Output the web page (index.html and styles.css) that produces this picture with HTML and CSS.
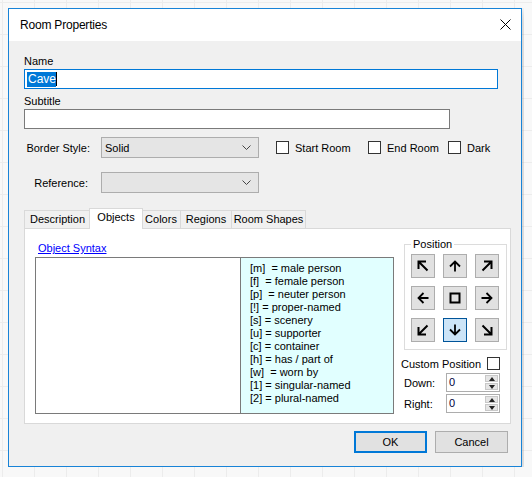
FILE: index.html
```html
<!DOCTYPE html>
<html lang="en">
<head>
    <meta charset="UTF-8">
    <title>Room Properties</title>
    <link rel="stylesheet" href="styles.css">
</head>
<body>
    <div class="dialog">
        <div class="titlebar">
            <span class="title">Room Properties</span>
            <svg class="close" width="11" height="11" viewBox="0 0 11 11"><path d="M0.5 0.5 L10.5 10.5 M10.5 0.5 L0.5 10.5" stroke="#000" stroke-width="1" fill="none"/></svg>
        </div>

        <div class="client">
            <div class="field-label">Name</div>
            <div class="textbox name-box focused"><span class="sel">Cave</span><span class="caret"></span></div>

            <div class="field-label gap">Subtitle</div>
            <div class="textbox subtitle-box"></div>

            <div class="row row-border">
                <div class="row-label">Border Style:</div>
                <div class="combo"><span>Solid</span>
                    <svg width="9" height="5" viewBox="0 0 9 5"><path d="M0.5 0.5 L4.5 4.5 L8.5 0.5" stroke="#444" fill="none"/></svg>
                </div>
                <label class="check check-start"><span class="box"></span>Start Room</label>
                <label class="check check-end"><span class="box"></span>End Room</label>
                <label class="check"><span class="box"></span>Dark</label>
            </div>

            <div class="row row-ref">
                <div class="row-label">Reference:</div>
                <div class="combo"><span></span>
                    <svg width="9" height="5" viewBox="0 0 9 5"><path d="M0.5 0.5 L4.5 4.5 L8.5 0.5" stroke="#444" fill="none"/></svg>
                </div>
            </div>

            <div class="tabs">
                <div class="tab tab-desc">Description</div>
                <div class="tab tab-obj active">Objects</div>
                <div class="tab tab-col">Colors</div>
                <div class="tab tab-reg">Regions</div>
                <div class="tab tab-shape">Room Shapes</div>
            </div>

            <div class="tab-panel">
                <div class="left-col">
                    <a class="link" href="#">Object Syntax</a>
                    <div class="syntax-box">
                        <div class="syntax-edit"></div>
                        <div class="syntax-help">
                            <div>[m]&nbsp; = male person</div>
                            <div>[f]&nbsp; = female person</div>
                            <div>[p]&nbsp; = neuter person</div>
                            <div>[!] = proper-named</div>
                            <div>[s] = scenery</div>
                            <div>[u] = supporter</div>
                            <div>[c] = container</div>
                            <div>[h] = has / part of</div>
                            <div>[w]&nbsp; = worn by</div>
                            <div>[1] = singular-named</div>
                            <div>[2] = plural-named</div>
                        </div>
                    </div>
                </div>

                <div class="right-col">
                    <div class="group">
                        <span class="legend">Position</span>
                        <div class="pos-grid">
                            <div class="pos-btn"><svg width="12" height="12" viewBox="0 0 12 12"><path d="M1.5 9 V1.5 H9 M1.5 1.5 L10.5 10.5" stroke="#000" stroke-width="2" fill="none"/></svg></div>
                            <div class="pos-btn"><svg width="12" height="12" viewBox="0 0 12 12"><path d="M6 11.5 V1.5 M1 6.5 L6 1.5 L11 6.5" stroke="#000" stroke-width="1.8" fill="none"/></svg></div>
                            <div class="pos-btn"><svg width="12" height="12" viewBox="0 0 12 12"><path d="M3 1.5 H10.5 V9 M10.5 1.5 L1.5 10.5" stroke="#000" stroke-width="2" fill="none"/></svg></div>
                            <div class="pos-btn"><svg width="12" height="12" viewBox="0 0 12 12"><path d="M11.5 6 H1.5 M6.5 1 L1.5 6 L6.5 11" stroke="#000" stroke-width="1.8" fill="none"/></svg></div>
                            <div class="pos-btn"><svg width="12" height="12" viewBox="0 0 12 12"><rect x="1.5" y="1.5" width="9" height="9" stroke="#000" stroke-width="2" fill="none"/></svg></div>
                            <div class="pos-btn"><svg width="12" height="12" viewBox="0 0 12 12"><path d="M0.5 6 H10.5 M5.5 1 L10.5 6 L5.5 11" stroke="#000" stroke-width="1.8" fill="none"/></svg></div>
                            <div class="pos-btn"><svg width="12" height="12" viewBox="0 0 12 12"><path d="M1.5 3 V10.5 H9 M1.5 10.5 L10.5 1.5" stroke="#000" stroke-width="2" fill="none"/></svg></div>
                            <div class="pos-btn current"><svg width="12" height="12" viewBox="0 0 12 12"><path d="M6 0.5 V10.5 M1 5.5 L6 10.5 L11 5.5" stroke="#000" stroke-width="1.8" fill="none"/></svg></div>
                            <div class="pos-btn"><svg width="12" height="12" viewBox="0 0 12 12"><path d="M10.5 3 V10.5 H3 M10.5 10.5 L1.5 1.5" stroke="#000" stroke-width="2" fill="none"/></svg></div>
                        </div>
                    </div>

                    <label class="custom-row">Custom Position <span class="box"></span></label>

                    <div class="spin-row">
                        <span class="spin-label">Down:</span>
                        <div class="spin"><span class="spin-val">0</span>
                            <div class="spin-btns"><span class="up"></span><span class="down"></span></div>
                        </div>
                    </div>
                    <div class="spin-row">
                        <span class="spin-label">Right:</span>
                        <div class="spin"><span class="spin-val">0</span>
                            <div class="spin-btns"><span class="up"></span><span class="down"></span></div>
                        </div>
                    </div>
                </div>
            </div>

            <div class="buttons">
                <button class="btn default">OK</button>
                <button class="btn">Cancel</button>
            </div>
        </div>
    </div>
</body>
</html>
```

FILE: styles.css
```css
* {
    margin: 0;
    padding: 0;
    box-sizing: border-box;
}
body {
    margin: 8px;
    font-family: "Liberation Sans", Arial, sans-serif;
    font-size: 11px;
    color: #000;
    background-color: #f8f8f8;
    background-image:
        linear-gradient(to right, #ececec 1px, transparent 1px),
        linear-gradient(to bottom, #ececec 1px, transparent 1px);
    background-size: 32px 32px;
    background-position: 2px 2px;
}
.dialog {
    width: 514px;
    border: 1px solid #1883d7;
    background: #f0f0f0;
    box-shadow: 3px 4px 10px rgba(0,0,0,0.18);
}
.titlebar {
    height: 32px;
    background: #ffffff;
    display: flex;
    align-items: center;
    justify-content: space-between;
    padding: 0 10px 0 11px;
}
.title {
    font-size: 12px;
    letter-spacing: -0.2px;
}
.close {
    display: block;
    margin-top: -2px;
}
.client {
    padding: 12px 11px 13px 15px;
}
.field-label {
    height: 16px;
    line-height: 16px;
}
.field-label.gap {
    margin-top: 4px;
}
.textbox {
    height: 20px;
    background: #fff;
    border: 1px solid #7a7a7a;
    display: flex;
    align-items: center;
    padding-left: 2px;
    font-size: 12px;
}
.name-box {
    width: 474px;
    border-color: #0078d7;
}
.subtitle-box {
    width: 426px;
}
.sel {
    background: #0078d7;
    color: #fff;
    line-height: 15px;
    padding: 0 0 0 1px;
}
.caret {
    width: 1px;
    height: 14px;
    background: #000;
}
.row {
    display: flex;
    align-items: center;
    height: 21px;
}
.row-border {
    margin-top: 8px;
}
.row-ref {
    margin-top: 14px;
}
.row-label {
    width: 67px;
    text-align: right;
    padding-right: 1px;
}
.row-ref .row-label {
    padding-right: 3px;
}
.combo {
    width: 158px;
    height: 21px;
    margin-left: 10px;
    background: #e5e5e5;
    border: 1px solid #adadad;
    display: flex;
    align-items: center;
    justify-content: space-between;
    padding: 0 7px 0 3px;
}
.check {
    display: flex;
    align-items: center;
}
.check-start {
    margin-left: 17px;
    width: 92px;
}
.check-end {
    width: 80px;
}
.box {
    display: inline-block;
    width: 13px;
    height: 13px;
    border: 1px solid #333;
    background: #fff;
    margin-right: 6px;
}
.tabs {
    display: flex;
    align-items: flex-end;
    height: 20px;
    margin-top: 15px;
    position: relative;
    z-index: 1;
}
.tab {
    height: 18px;
    border: 1px solid #d9d9d9;
    border-bottom: none;
    background: #f0f0f0;
    text-align: center;
    line-height: 17px;
    margin-left: -1px;
}
.tab-desc { width: 67px; margin-left: 0; }
.tab-obj { width: 54px; margin-left: -2px; }
.tab-col { width: 40px; }
.tab-reg { width: 52px; }
.tab-shape { width: 75px; }
.tab.active {
    height: 21px;
    margin-bottom: -1px;
    background: #fff;
    position: relative;
    z-index: 2;
}
.tab.active + .tab {
    margin-left: -2px;
}
.tab-panel {
    width: 487px;
    height: 196px;
    background: #fff;
    border: 1px solid #d9d9d9;
    display: flex;
    padding: 12px 0 0 10px;
}
.left-col {
    width: 359px;
}
.link {
    display: inline-block;
    color: #0000ff;
    text-decoration: underline;
    line-height: 15px;
    height: 15px;
    margin-left: 3px;
    margin-bottom: 1px;
}
.syntax-box {
    width: 359px;
    height: 157px;
    border: 1px solid #7a7a7a;
    display: flex;
}
.syntax-edit {
    width: 204px;
    background: #fff;
}
.syntax-help {
    width: 153px;
    border-left: 1px solid #7a7a7a;
    background: #e1ffff;
    padding: 4px 0 0 9px;
    line-height: 13px;
    white-space: nowrap;
}
.right-col {
    margin-left: 7px;
    width: 106px;
}
.group {
    position: relative;
    margin-top: 3px;
    margin-left: 3px;
    width: 103px;
    height: 106px;
    border: 1px solid #dcdcdc;
    padding: 9px 0 0 6px;
}
.legend {
    position: absolute;
    top: -8px;
    left: 6px;
    background: #fff;
    padding: 0 2px;
    line-height: 14px;
}
.pos-grid {
    display: grid;
    grid-template-columns: repeat(3, 24px);
    grid-auto-rows: 24px;
    gap: 8px;
}
.pos-btn {
    background: #e1e1e1;
    border: 1px solid #adadad;
    display: flex;
    align-items: center;
    justify-content: center;
}
.pos-btn.current {
    background: #cce4f7;
    border-color: #005499;
}
.custom-row {
    display: flex;
    align-items: center;
    justify-content: space-between;
    width: 99px;
    height: 15px;
    margin-top: 6px;
}
.custom-row .box {
    margin-right: 0;
}
.spin-row {
    display: flex;
    align-items: center;
    height: 19px;
    margin-top: 2px;
}
.spin-label {
    width: 45px;
    padding-left: 3px;
}
.spin {
    width: 54px;
    height: 19px;
    background: #fff;
    border: 1px solid #adadad;
    display: flex;
    justify-content: space-between;
    padding: 1px 1px 1px 2px;
}
.spin-val {
    line-height: 14px;
    color: #000040;
}
.spin-btns {
    width: 13px;
    display: flex;
    flex-direction: column;
    gap: 1px;
}
.spin-btns span {
    flex: 1;
    background: #e5e5e5;
    border: 1px solid #c8c8c8;
    position: relative;
}
.spin-btns span::after {
    content: "";
    position: absolute;
    left: 3px;
    top: 1px;
    border-left: 3px solid transparent;
    border-right: 3px solid transparent;
}
.spin-btns .up::after {
    border-bottom: 4px solid #222;
}
.spin-btns .down::after {
    border-top: 4px solid #222;
}
.buttons {
    display: flex;
    justify-content: flex-end;
    gap: 8px;
    margin-top: 7px;
    padding-right: 2px;
}
.btn {
    width: 73px;
    height: 22px;
    background: #e1e1e1;
    border: 1px solid #adadad;
    font-family: "Liberation Sans", Arial, sans-serif;
    font-size: 11px;
    color: #000;
}
.btn.default {
    border: 2px solid #0078d7;
}
```
